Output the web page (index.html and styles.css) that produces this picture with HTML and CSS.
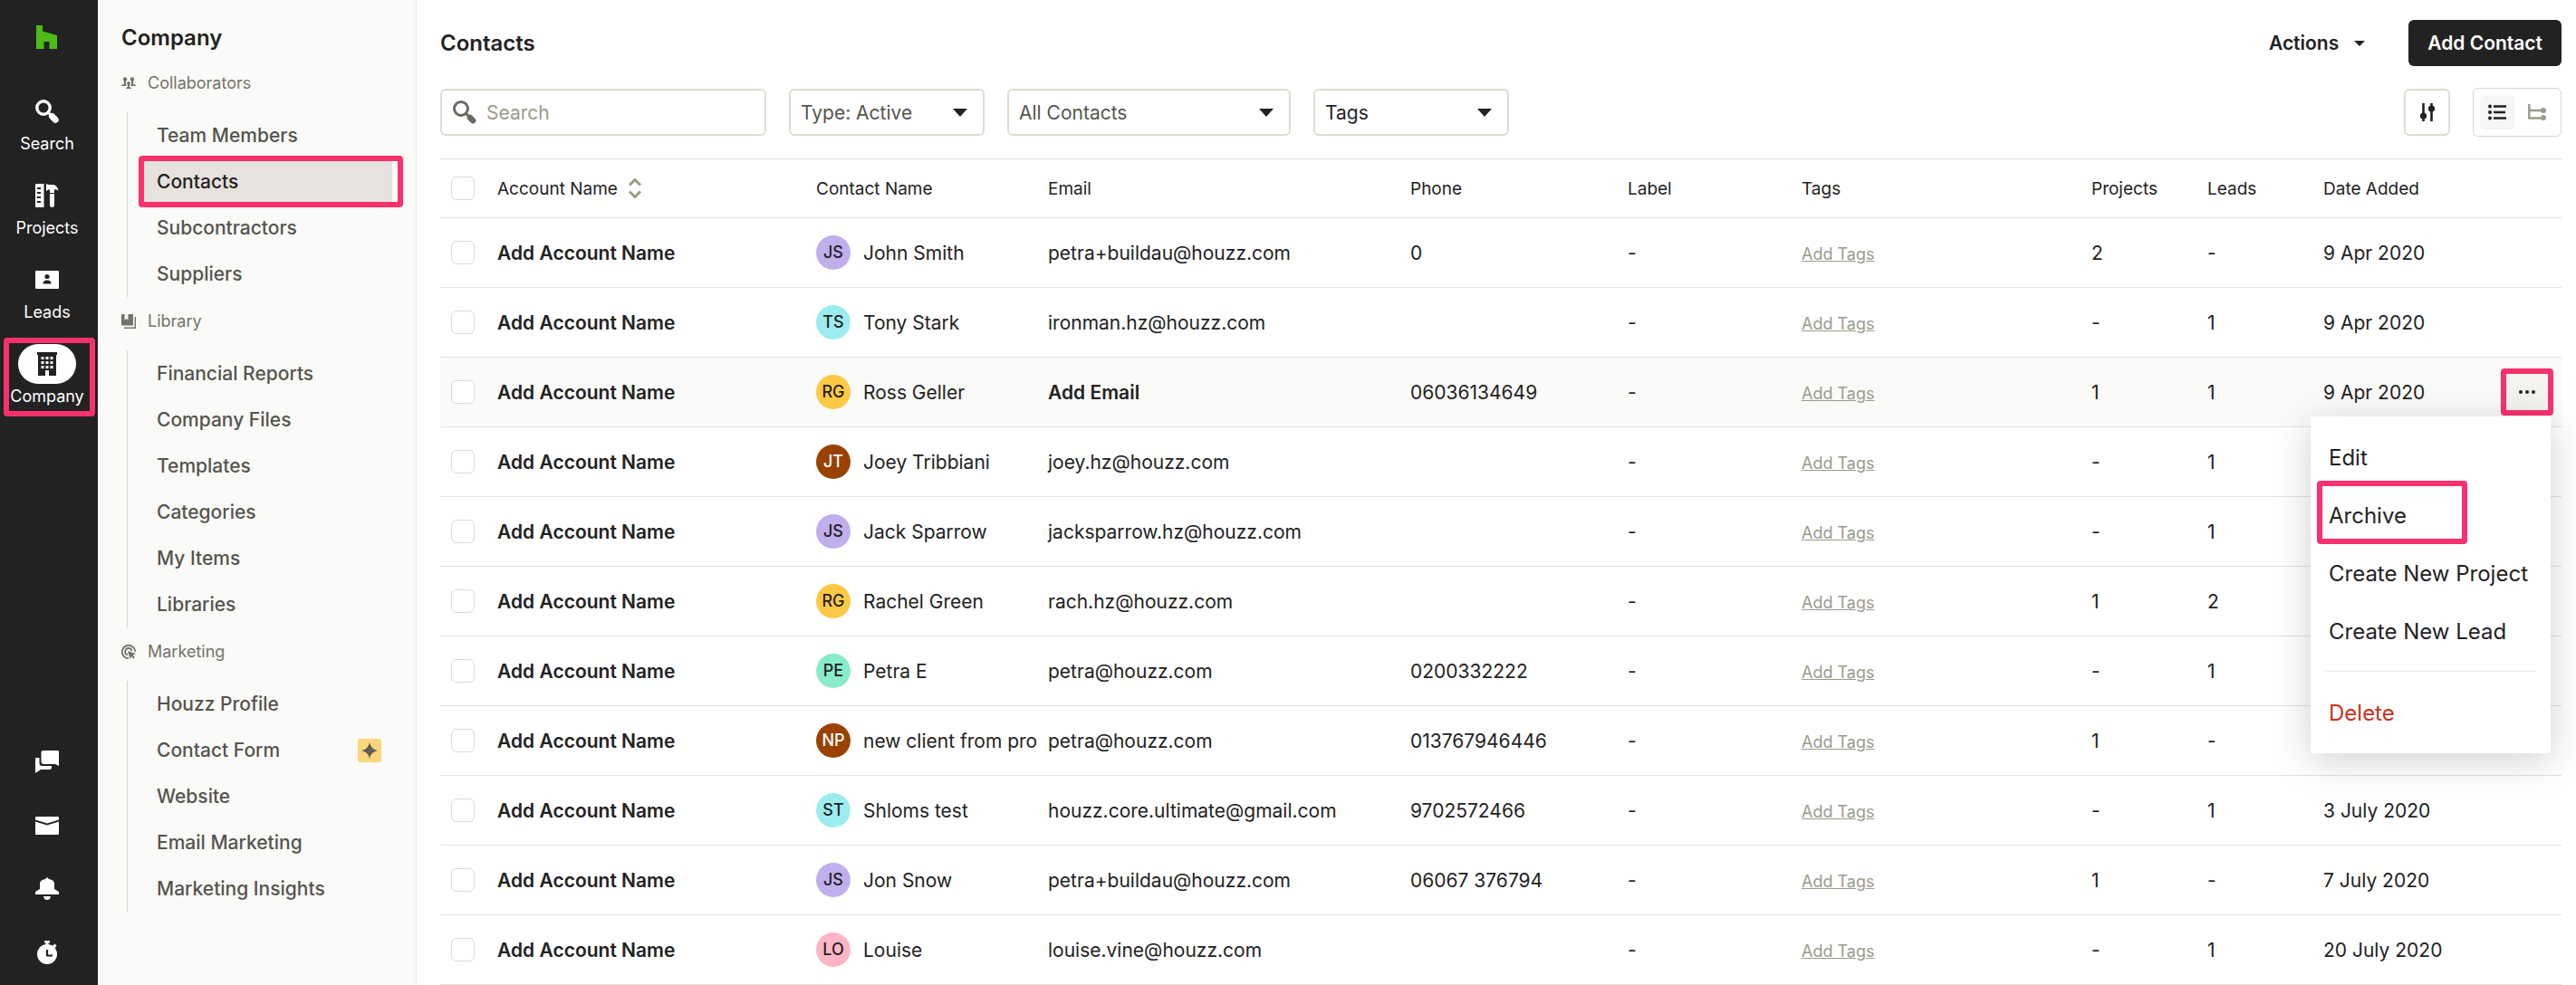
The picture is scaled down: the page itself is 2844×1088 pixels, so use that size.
FILE: index.html
```html
<!DOCTYPE html>
<html lang="en">
<head>
    <meta charset="UTF-8">
    <meta name="viewport" content="width=device-width, initial-scale=1.0">
    <title>Contacts</title>
    <link rel="stylesheet" href="styles.css">
</head>
<body>
<div class="app">

    <!-- Main navigation rail -->
    <nav class="rail" aria-label="Main">
        <a href="#" class="logo" aria-label="Home">
            <svg width="24" height="26" viewBox="0 0 24 26"><path fill="#4dbc15" d="M0 0h7v6.500l16 4.500v15h-8.500v-8h-6v8H0z"/></svg>
        </a>
        <a href="#" class="rail-item">
            <span class="rail-icon">
                <svg width="26" height="26" viewBox="0 0 26 26"><circle cx="9" cy="9" r="7.200" fill="none" stroke="currentColor" stroke-width="3.400"/><path d="M13 13l4 4" stroke="currentColor" stroke-width="3"/><path d="M18.500 18.500l3.700 3.700" stroke="currentColor" stroke-width="7" stroke-linecap="round"/></svg>
            </span>
            Search
        </a>
        <a href="#" class="rail-item">
            <span class="rail-icon">
                <svg width="26" height="26" viewBox="0 0 26 26" fill="currentColor"><path fill-rule="evenodd" d="M1 0h8.500v26H1a1 1 0 0 1-1-1V1a1 1 0 0 1 1-1zM2 4v2h4V4zm0 5v2h4V9zm0 5v2h4v-2zm0 5v2h4v-2z"/><path d="M12 0l2.500 1H20q4.500 1 5.500 6.500Q23 6 21 6v4h-5V6.500h-1.500L12 8z"/><path d="M16 11h5v13q0 2-2.500 2T16 24z"/></svg>
            </span>
            Projects
        </a>
        <a href="#" class="rail-item">
            <span class="rail-icon">
                <svg width="26" height="26" viewBox="0 0 26 26"><rect y="3" width="26" height="20" rx="1" fill="currentColor"/><g fill="#222"><circle cx="13" cy="9.500" r="2.600"/><path d="M8.500 17.500q0-4 4.500-4t4.500 4z"/></g></svg>
            </span>
            Leads
        </a>
        <a href="#" class="rail-item active highlight" aria-current="page">
            <span class="rail-icon">
                <svg width="26" height="26" viewBox="0 0 26 26" fill="currentColor"><path fill-rule="evenodd" d="M2 0h22v3h-1v23h-8v-6h-4v6H3V3H2zM6.500 5v3h3V5zm5 0v3h3V5zm5 0v3h3V5zm-10 5v3h3v-3zm5 0v3h3v-3zm5 0v3h3v-3zm-10 5v3h3v-3zm5 0v3h3v-3zm5 0v3h3v-3z"/></svg>
            </span>
            Company
        </a>
        <div class="rail-tools">
            <button type="button" aria-label="Messages">
                <svg width="26" height="26" viewBox="0 0 26 26" fill="currentColor"><path d="M8.500 0h16.500q1 0 1 1v16l-4-2H9.500q-3 0-3-3V2q0-2 2-2z"/><path d="M0 9q0-1 1-1h3.500v6q0 3 3 3H18v2q0 2-2 2H6L0 25z"/></svg>
            </button>
            <button type="button" aria-label="Mail">
                <svg width="26" height="26" viewBox="0 0 26 26" fill="currentColor"><path d="M1 3h24q1 0 1 1v2.500L13 10.500 0 6.500V4q0-1 1-1z"/><path d="M0 8.500l13 4 13-4V22q0 1-1 1H1q-1 0-1-1z"/></svg>
            </button>
            <button type="button" aria-label="Notifications">
                <svg width="26" height="26" viewBox="0 0 26 26" fill="currentColor"><path d="M13 0l2 2q6 1 6 5v6l5 3v3H0v-3l5-3V7q0-4 6-5z"/><path d="M9 21h8q-.5 4-4 4t-4-4z"/></svg>
            </button>
            <button type="button" aria-label="Timer">
                <svg width="26" height="26" viewBox="0 0 26 26" fill="currentColor"><path d="M10 0h6v2.500h-1.500V5h-3V2.500H10zM18.500 6l3-2.500 2 2-2 3z"/><circle cx="13" cy="15" r="11"/><path d="M13 10v6.500h6" fill="none" stroke="#222" stroke-width="2.200"/></svg>
            </button>
        </div>
    </nav>

    <!-- Company side menu -->
    <aside class="sidebar">
        <h2>Company</h2>

        <h3>
            <svg width="16" height="16" viewBox="0 0 16 16" fill="currentColor"><circle cx="4" cy="3.500" r="2.200"/><circle cx="12" cy="3.500" r="2.200"/><circle cx="8" cy="8" r="1.900"/><path d="M0 11q0-2 3-2V5h2v4l1 2zM16 11q0-2-3-2V5h-2v4l-1 2zM5 14q0-1.500 2-2V9h2v3q2 .5 2 2z"/></svg>
            Collaborators
        </h3>
        <ul>
            <li><a href="#">Team Members</a></li>
            <li><a href="#" class="active highlight" aria-current="page">Contacts</a></li>
            <li><a href="#">Subcontractors</a></li>
            <li><a href="#">Suppliers</a></li>
        </ul>

        <h3>
            <svg width="16" height="16" viewBox="0 0 16 16"><path fill="currentColor" d="M1 0h2.500v6.500L5.500 5l2 1.500V0H13v12.500H1q-1 0-1-1V1q0-1 1-1z"/><path d="M15.300 3v12.200H3" fill="none" stroke="currentColor" stroke-width="1.400"/></svg>
            Library
        </h3>
        <ul>
            <li><a href="#">Financial Reports</a></li>
            <li><a href="#">Company Files</a></li>
            <li><a href="#">Templates</a></li>
            <li><a href="#">Categories</a></li>
            <li><a href="#">My Items</a></li>
            <li><a href="#">Libraries</a></li>
        </ul>

        <h3>
            <svg width="16" height="16" viewBox="0 0 16 16"><path d="M8 15.200A7.200 7.200 0 1 1 15.200 8M7 11.300A3.700 3.700 0 1 1 11.500 7" fill="none" stroke="currentColor" stroke-width="1.800"/><path fill="currentColor" d="M7 7l9 3-3.500 1.500 2.500 2.500-1.500 1.500-2.500-2.500L9.500 16z"/></svg>
            Marketing
        </h3>
        <ul>
            <li><a href="#">Houzz Profile</a></li>
            <li>
                <a href="#">Contact Form
                    <span class="spark"><svg width="18" height="18" viewBox="0 0 18 18"><path fill="#5f5e55" d="M9 0q1.500 7.500 9 9-7.500 1.500-9 9-1.500-7.500-9-9 7.500-1.500 9-9z"/></svg></span>
                </a>
            </li>
            <li><a href="#">Website</a></li>
            <li><a href="#">Email Marketing</a></li>
            <li><a href="#">Marketing Insights</a></li>
        </ul>
    </aside>

    <main class="content">
        <header class="page-header">
            <h1>Contacts</h1>
            <button type="button" class="actions-button">Actions <span class="caret small"></span></button>
            <button type="button" class="add-button">Add Contact</button>
        </header>

        <div class="filters">
            <div class="search-box">
                <svg width="26" height="26" viewBox="0 0 26 26"><circle cx="9" cy="9" r="7.500" fill="none" stroke="currentColor" stroke-width="3"/><path d="M13.500 13.500l4 4" stroke="currentColor" stroke-width="3"/><path d="M19 19l3.200 3.200" stroke="currentColor" stroke-width="6.500" stroke-linecap="round"/></svg>
                <input type="text" placeholder="Search" aria-label="Search contacts">
            </div>
            <div class="select-box">
                <select aria-label="Type"><option>Type: Active</option></select>
                <span class="caret"></span>
            </div>
            <div class="select-box wide">
                <select aria-label="Contacts"><option>All Contacts</option></select>
                <span class="caret"></span>
            </div>
            <div class="select-box dark">
                <select aria-label="Tags"><option>Tags</option></select>
                <span class="caret"></span>
            </div>
            <button type="button" class="settings-button" aria-label="Table settings">
                <svg width="18" height="20" viewBox="0 0 18 20"><path d="M4.500 0v20M13.500 0v20" stroke="currentColor" stroke-width="2.600"/><circle cx="4.500" cy="14" r="3.600" fill="currentColor"/><circle cx="13.500" cy="6" r="3.600" fill="currentColor"/></svg>
            </button>
            <div class="view-toggle">
                <button type="button" class="active" aria-label="List view">
                    <svg width="20" height="18" viewBox="0 0 20 18"><path d="M6 2.500h14M6 9h13M6 15.500h14" stroke="currentColor" stroke-width="2.500"/><g fill="currentColor"><circle cx="2" cy="2.500" r="2"/><circle cx="2" cy="9" r="2"/><circle cx="2" cy="15.500" r="2"/></g></svg>
                </button>
                <button type="button" aria-label="Tree view">
                    <svg width="20" height="18" viewBox="0 0 20 18"><path d="M1.300 0v15.500H17M1.300 7H17" fill="none" stroke="currentColor" stroke-width="2.400"/><circle cx="17" cy="7" r="3" fill="currentColor"/><circle cx="17" cy="15" r="3" fill="currentColor"/></svg>
                </button>
            </div>
        </div>

        <table class="contacts">
            <colgroup>
                <col class="col-check"><col class="col-account"><col class="col-contact"><col class="col-email"><col class="col-phone"><col class="col-label"><col class="col-tags"><col class="col-count"><col class="col-count"><col class="col-date"><col class="col-menu">
            </colgroup>
            <thead>
                <tr>
                    <th><input type="checkbox" aria-label="Select all"></th>
                    <th>
                        <button type="button" class="sort">Account Name
                            <svg width="14" height="22" viewBox="0 0 14 22" fill="none" stroke="#9b9a8c" stroke-width="3"><path d="M1 7.500l6-6 6 6M1 14.500l6 6 6-6"/></svg>
                        </button>
                    </th>
                    <th>Contact Name</th><th>Email</th><th>Phone</th><th>Label</th><th>Tags</th><th>Projects</th><th>Leads</th><th>Date Added</th><th></th>
                </tr>
            </thead>
            <tbody>
                <tr>
                    <td><input type="checkbox" aria-label="Select John Smith"></td>
                    <td><a href="#" class="add-link">Add Account Name</a></td>
                    <td><div class="person"><span class="avatar purple">JS</span>John Smith</div></td>
                    <td>petra+buildau@houzz.com</td><td>0</td><td>-</td>
                    <td><a href="#" class="add-tags">Add Tags</a></td>
                    <td>2</td><td>-</td><td>9 Apr 2020</td><td></td>
                </tr>
                <tr>
                    <td><input type="checkbox" aria-label="Select Tony Stark"></td>
                    <td><a href="#" class="add-link">Add Account Name</a></td>
                    <td><div class="person"><span class="avatar cyan">TS</span>Tony Stark</div></td>
                    <td>ironman.hz@houzz.com</td><td></td><td>-</td>
                    <td><a href="#" class="add-tags">Add Tags</a></td>
                    <td>-</td><td>1</td><td>9 Apr 2020</td><td></td>
                </tr>
                <tr class="selected">
                    <td><input type="checkbox" aria-label="Select Ross Geller"></td>
                    <td><a href="#" class="add-link">Add Account Name</a></td>
                    <td><div class="person"><span class="avatar yellow">RG</span>Ross Geller</div></td>
                    <td><a href="#" class="add-link">Add Email</a></td><td>06036134649</td><td>-</td>
                    <td><a href="#" class="add-tags">Add Tags</a></td>
                    <td>1</td><td>1</td><td>9 Apr 2020</td>
                    <td class="menu-cell">
                        <button type="button" class="more highlight" aria-label="More actions">
                            <svg width="18" height="4" viewBox="0 0 18 4" fill="currentColor"><circle cx="2" cy="2" r="2"/><circle cx="9" cy="2" r="2"/><circle cx="16" cy="2" r="2"/></svg>
                        </button>
                        <div class="row-menu">
                            <button type="button">Edit</button>
                            <button type="button" class="highlight">Archive</button>
                            <button type="button">Create New Project</button>
                            <button type="button">Create New Lead</button>
                            <hr>
                            <button type="button" class="delete">Delete</button>
                        </div>
                    </td>
                </tr>
                <tr>
                    <td><input type="checkbox" aria-label="Select Joey Tribbiani"></td>
                    <td><a href="#" class="add-link">Add Account Name</a></td>
                    <td><div class="person"><span class="avatar brown">JT</span>Joey Tribbiani</div></td>
                    <td>joey.hz@houzz.com</td><td></td><td>-</td>
                    <td><a href="#" class="add-tags">Add Tags</a></td>
                    <td>-</td><td>1</td><td></td><td></td>
                </tr>
                <tr>
                    <td><input type="checkbox" aria-label="Select Jack Sparrow"></td>
                    <td><a href="#" class="add-link">Add Account Name</a></td>
                    <td><div class="person"><span class="avatar purple">JS</span>Jack Sparrow</div></td>
                    <td>jacksparrow.hz@houzz.com</td><td></td><td>-</td>
                    <td><a href="#" class="add-tags">Add Tags</a></td>
                    <td>-</td><td>1</td><td></td><td></td>
                </tr>
                <tr>
                    <td><input type="checkbox" aria-label="Select Rachel Green"></td>
                    <td><a href="#" class="add-link">Add Account Name</a></td>
                    <td><div class="person"><span class="avatar yellow">RG</span>Rachel Green</div></td>
                    <td>rach.hz@houzz.com</td><td></td><td>-</td>
                    <td><a href="#" class="add-tags">Add Tags</a></td>
                    <td>1</td><td>2</td><td></td><td></td>
                </tr>
                <tr>
                    <td><input type="checkbox" aria-label="Select Petra E"></td>
                    <td><a href="#" class="add-link">Add Account Name</a></td>
                    <td><div class="person"><span class="avatar green">PE</span>Petra E</div></td>
                    <td>petra@houzz.com</td><td>0200332222</td><td>-</td>
                    <td><a href="#" class="add-tags">Add Tags</a></td>
                    <td>-</td><td>1</td><td></td><td></td>
                </tr>
                <tr>
                    <td><input type="checkbox" aria-label="Select new client"></td>
                    <td><a href="#" class="add-link">Add Account Name</a></td>
                    <td><div class="person"><span class="avatar brown">NP</span>new client from pro</div></td>
                    <td>petra@houzz.com</td><td>013767946446</td><td>-</td>
                    <td><a href="#" class="add-tags">Add Tags</a></td>
                    <td>1</td><td>-</td><td></td><td></td>
                </tr>
                <tr>
                    <td><input type="checkbox" aria-label="Select Shloms test"></td>
                    <td><a href="#" class="add-link">Add Account Name</a></td>
                    <td><div class="person"><span class="avatar cyan">ST</span>Shloms test</div></td>
                    <td>houzz.core.ultimate@gmail.com</td><td>9702572466</td><td>-</td>
                    <td><a href="#" class="add-tags">Add Tags</a></td>
                    <td>-</td><td>1</td><td>3 July 2020</td><td></td>
                </tr>
                <tr>
                    <td><input type="checkbox" aria-label="Select Jon Snow"></td>
                    <td><a href="#" class="add-link">Add Account Name</a></td>
                    <td><div class="person"><span class="avatar purple">JS</span>Jon Snow</div></td>
                    <td>petra+buildau@houzz.com</td><td>06067 376794</td><td>-</td>
                    <td><a href="#" class="add-tags">Add Tags</a></td>
                    <td>1</td><td>-</td><td>7 July 2020</td><td></td>
                </tr>
                <tr>
                    <td><input type="checkbox" aria-label="Select Louise"></td>
                    <td><a href="#" class="add-link">Add Account Name</a></td>
                    <td><div class="person"><span class="avatar pink">LO</span>Louise</div></td>
                    <td>louise.vine@houzz.com</td><td></td><td>-</td>
                    <td><a href="#" class="add-tags">Add Tags</a></td>
                    <td>-</td><td>1</td><td>20 July 2020</td><td></td>
                </tr>
            </tbody>
        </table>
    </main>

</div>
</body>
</html>
```
FILE: styles.css
```css
/* General page styles */
* {
    box-sizing: border-box;
}

body {
    margin: 0;
    font-family: 'Inter', sans-serif;
    font-size: 21px;
    color: #222;
    background-color: #fff;
}

a {
    color: inherit;
    text-decoration: none;
}

button {
    font: inherit;
    color: inherit;
    background: none;
    border: none;
    padding: 0;
    cursor: pointer;
}

svg {
    display: block;
    flex: none;
}

.app {
    display: flex;
    height: 100vh;
    overflow: hidden;
}

/* Pink frame around the highlighted controls */
.highlight {
    position: relative;
}

.highlight::after {
    content: '';
    position: absolute;
    inset: 0;
    border: 6px solid #f9316d;
    border-radius: 4px;
}

/* Navigation rail */
.rail {
    flex: none;
    width: 108px;
    padding: 28px 4px 23px 0;
    display: flex;
    flex-direction: column;
    align-items: center;
    background-color: #222;
    color: #fff;
}

.logo {
    margin-bottom: 47px;
}

.rail-item {
    display: flex;
    flex-direction: column;
    align-items: center;
    gap: 2px;
    margin-bottom: 23px;
    font-size: 18px;
    line-height: 24px;
}

.rail-icon {
    width: 64px;
    height: 44px;
    display: flex;
    align-items: center;
    justify-content: center;
    border-radius: 22px;
}

.rail-item.active .rail-icon {
    background-color: #fff;
    color: #222;
}

.rail-item.highlight::after {
    inset: -7px -12px -10px -7px;
}

.rail-tools {
    margin-top: auto;
    display: flex;
    flex-direction: column;
    gap: 44px;
}

/* Sidebar */
.sidebar {
    flex: none;
    width: 352px;
    padding: 26px 26px 0;
    background-color: #fafaf8;
    border-right: 1px solid #e6e6e3;
}

.sidebar h2 {
    margin: 0 0 7px;
    font-size: 24px;
    line-height: 32px;
    font-weight: 600;
}

.sidebar h3 {
    display: flex;
    align-items: center;
    gap: 13px;
    margin: 0;
    padding: 15px 0 20px;
    font-size: 18px;
    line-height: 24px;
    font-weight: 400;
    color: #73726a;
}

.sidebar ul {
    list-style: none;
    margin: 0 0 0 6px;
    padding: 0 0 0 13px;
    border-left: 1px solid #d6d5cf;
}

.sidebar li {
    padding: 3px 0;
}

.sidebar li a {
    display: flex;
    align-items: center;
    justify-content: space-between;
    height: 45px;
    padding: 0 12px 0 19px;
    font-weight: 500;
    color: #55544d;
}

.sidebar li a.active {
    background-color: #e6e2dd;
    color: #222;
}

.sidebar li a.highlight::after {
    inset: -6px -12px -6px -1px;
}

.spark {
    width: 26px;
    height: 26px;
    display: flex;
    align-items: center;
    justify-content: center;
    border-radius: 3px;
    background-color: #fcd67b;
}

/* Content */
.content {
    flex: 1;
    min-width: 0;
    padding: 22px 16px 0 26px;
    overflow: hidden;
}

.page-header {
    display: flex;
    align-items: center;
    margin-bottom: 24px;
}

.page-header h1 {
    margin: 0 auto 0 0;
    font-size: 24px;
    font-weight: 600;
}

.actions-button {
    display: flex;
    align-items: center;
    gap: 17px;
    margin-right: 48px;
    font-weight: 600;
}

.add-button {
    height: 51px;
    padding: 0 21px;
    border-radius: 6px;
    background-color: #222;
    color: #fff;
    font-weight: 600;
}

.caret {
    border: 8px solid transparent;
    border-top: 9px solid #222;
    border-bottom: none;
}

.caret.small {
    border-width: 6px;
    border-bottom: none;
}

/* Filters */
.filters {
    display: flex;
    align-items: center;
    gap: 25px;
    margin-bottom: 24px;
}

.search-box,
.select-box,
.settings-button {
    height: 52px;
    border: 2px solid #deddd3;
    border-radius: 6px;
    background-color: #fff;
}

.search-box {
    width: 360px;
    display: flex;
    align-items: center;
    gap: 11px;
    padding: 0 12px;
    color: #6b6a60;
}

.search-box input {
    flex: 1;
    min-width: 0;
    padding: 0;
    border: none;
    outline: none;
    font: inherit;
    color: #222;
}

.search-box input::placeholder {
    color: #9b9a8e;
}

.select-box {
    position: relative;
    width: 216px;
}

.select-box.wide {
    width: 313px;
}

.select-box select {
    appearance: none;
    width: 100%;
    height: 100%;
    padding: 0 40px 0 11px;
    border: none;
    border-radius: 6px;
    background: none;
    font: inherit;
    color: #55544d;
}

.select-box.dark select {
    color: #222;
}

.select-box .caret {
    position: absolute;
    top: 20px;
    right: 17px;
    pointer-events: none;
}

.settings-button {
    width: 51px;
    margin-left: auto;
    display: flex;
    align-items: center;
    justify-content: center;
}

.view-toggle {
    display: flex;
    gap: 6px;
    padding: 7px;
    border: 1px solid #d6d5cf;
    border-radius: 6px;
}

.view-toggle button {
    width: 38px;
    height: 38px;
    display: flex;
    align-items: center;
    justify-content: center;
    border-radius: 6px;
    color: #9b9a8c;
}

.view-toggle button.active {
    background-color: #f6f5f3;
    color: #222;
}

/* Contacts table */
.contacts {
    width: 100%;
    table-layout: fixed;
    border-collapse: separate;
    border-spacing: 0;
    border-top: 1px solid #e2e2df;
}

.col-check { width: 63px; }
.col-account { width: 352px; }
.col-contact { width: 256px; }
.col-email { width: 400px; }
.col-phone { width: 240px; }
.col-label { width: 192px; }
.col-tags { width: 320px; }
.col-count { width: 128px; }
.col-date { width: 180px; }

.contacts th,
.contacts td {
    padding: 0 12px 0 0;
    border-bottom: 1px solid #e2e2df;
    text-align: left;
    white-space: nowrap;
}

.contacts th {
    height: 65px;
    font-size: 19px;
    font-weight: 400;
}

.contacts td {
    height: 77px;
}

.contacts th:first-child,
.contacts td:first-child {
    padding-left: 12px;
}

.contacts input[type="checkbox"] {
    appearance: none;
    display: block;
    width: 26px;
    height: 26px;
    margin: 0;
    border: 1px solid #dcdbd6;
    border-radius: 6px;
    background-color: #fff;
}

.contacts tr.selected td {
    background-color: #fafaf8;
}

.sort {
    display: flex;
    align-items: center;
    gap: 12px;
}

.add-link {
    font-weight: 600;
}

.person {
    display: flex;
    align-items: center;
    gap: 14px;
    overflow: hidden;
}

.avatar {
    flex: none;
    width: 38px;
    height: 38px;
    border-radius: 50%;
    font-size: 18px;
    line-height: 38px;
    font-weight: 500;
    text-align: center;
}

.purple { background-color: #c1aeec; }
.cyan { background-color: #9cedf0; }
.yellow { background-color: #ffc845; }
.green { background-color: #88eccb; }
.pink { background-color: #ffb5c5; }
.brown { background-color: #994200; color: #fff; }

.add-tags {
    font-size: 18px;
    color: #9b9a8e;
    text-decoration: underline;
}

/* Row menu */
.contacts .menu-cell {
    position: relative;
    padding-right: 9px;
}

.more {
    display: flex;
    align-items: center;
    justify-content: center;
    width: 58px;
    height: 52px;
    margin-left: auto;
    background-color: #f4f3f0;
}

.row-menu {
    position: absolute;
    z-index: 1;
    top: 65px;
    right: 12px;
    min-width: 265px;
    padding: 13px 0;
    background-color: #fff;
    box-shadow: 0 8px 40px rgba(0, 0, 0, 0.18);
}

.row-menu button {
    display: block;
    width: 100%;
    height: 64px;
    padding: 0 20px;
    font-size: 24px;
    text-align: left;
    white-space: nowrap;
}

.row-menu button.highlight::after {
    inset: -6px 92px 0 7px;
}

.row-menu hr {
    margin: 12px 17px 13px;
    border: none;
    border-top: 1px solid #ebebe8;
}

.row-menu .delete {
    color: #c9301c;
}
```
